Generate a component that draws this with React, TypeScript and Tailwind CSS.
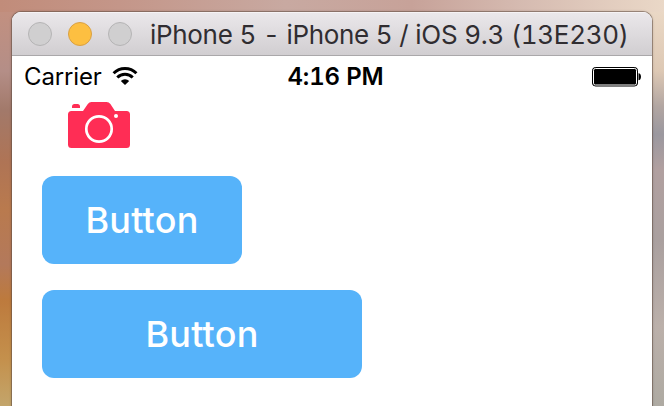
import type { ReactNode } from "react";

function TitleBar() {
  return (
    <div className="flex h-11 shrink-0 items-center border-b border-[#aaa8aa] bg-linear-to-b from-[#ebe8eb] to-[#d1ced1] pl-4 shadow-[inset_0_1px_0_#f6f3f5]">
      <div className="flex gap-4">
        <span className="size-6 rounded-full border border-[#b5b4b5] bg-[#d0cfd0]" />
        <span className="size-6 rounded-full border border-[#d9a044] bg-[#fdbf41]" />
        <span className="size-6 rounded-full border border-[#b5b4b5] bg-[#d0cfd0]" />
      </div>
      <h1 className="ml-[18px] pt-[3px] text-[26px] leading-none tracking-[-0.32px] whitespace-pre text-[#302d31] tabular-nums [word-spacing:0.3px]">
        iPhone 5 - iPhone 5 / iOS 9.3 (13E230)
      </h1>
    </div>
  );
}

function Wifi() {
  return (
    <svg className="h-[18px] w-[26px]" viewBox="0 0 26 18" fill="none" stroke="#000" strokeWidth="3">
      <path d="M1.6 6.3a16.2 16.2 0 0 1 22.8 0" />
      <path d="M5.3 10.5a10.9 10.9 0 0 1 15.4 0" />
      <path d="M13 18L8.8 13.9a6 6 0 0 1 8.4 0z" fill="#000" stroke="none" />
    </svg>
  );
}

function Battery() {
  return (
    <svg className="h-5 w-[50px]" viewBox="0 0 50 20">
      <rect x="0.5" y="0.5" width="45" height="18.5" rx="3" fill="#000" stroke="#000" />
      <rect x="1.5" y="1.5" width="43" height="16.5" rx="1.8" fill="#000" stroke="#fff" />
      <path d="M46.5 6.3c1.6 0 2.5 1.6 2.5 3.5s-.9 3.5-2.5 3.5z" />
    </svg>
  );
}

function StatusBar() {
  return (
    <div className="grid h-10 grid-cols-3 items-center pr-[10px] pl-3 text-[24px] leading-none text-black">
      <div className="flex items-center gap-[10px]">
        <span className="pt-0.5 tracking-[-0.15px]">Carrier</span>
        <Wifi />
      </div>
      <span className="justify-self-center pt-0.5 pl-[5px] font-semibold tracking-[-0.15px] tabular-nums">4:16 PM</span>
      <span className="justify-self-end pt-0.5"><Battery /></span>
    </div>
  );
}

function Camera() {
  return (
    <svg className="mt-[6px] ml-14 h-[46px] w-[62px]" viewBox="0 0 62 46" fill="#ff2d55">
      <path d="M4 6V4.5Q4 2 6.5 2h3Q12 2 12 4.5V6z" />
      <path d="M3.5 9H15l4.8-7Q21.2 0 23.5 0h15Q41 0 42.4 2L47 9h11.5Q62 9 62 12.5v30Q62 46 58.5 46h-55Q0 46 0 42.5v-30Q0 9 3.5 9z" />
      <circle cx="31" cy="27" r="12.7" fill="none" stroke="#fff" strokeWidth="2.7" />
      <circle cx="48" cy="14" r="2" fill="#fff" />
    </svg>
  );
}

function Button({ className, children }: { className: string; children: ReactNode }) {
  return (
    <button className={`ml-[30px] block h-[88px] rounded-xl bg-[#56b3fa] text-[36px] leading-none font-medium tracking-[0.2px] text-white ${className}`}>
      {children}
    </button>
  );
}

export default function App() {
  return (
    <div className="h-[406px] w-[664px] overflow-hidden pt-3 pl-3 font-['Inter','Liberation_Sans',sans-serif] [background:linear-gradient(90deg,#c18c7a,#c49689_18%,#c8a9a1_43%,#c7a299_62%,#d5bab0_78%,#ead8c7)_0_0/664px_12px_no-repeat,linear-gradient(#c29080,#b48e87_15%,#a2796a_25%,#af7455_38%,#b97a4e_50%,#b3795b_64%,#bd7a3d_73%,#c4904c_88%,#c3a56b)_0_12px/26px_394px_no-repeat,linear-gradient(#ead8c5,#ddc8b4_15%,#b2a6a2_24%,#9b989f_31%,#b1a0a0_40%,#aaa09f_58%,#bbb0aa_80%,#aeaaa2)_638px_12px/26px_394px_no-repeat]">
      <main className="flex h-[400px] w-[640px] flex-col overflow-hidden rounded-t-[9px] bg-white shadow-[0_0_0_1px_#69554988,0_0_3px_#0005]">
        <TitleBar />
        <StatusBar />
        <Camera />
        <Button className="mt-7 w-[200px]">Button</Button>
        <Button className="mt-[26px] w-80">Button</Button>
      </main>
    </div>
  );
}
